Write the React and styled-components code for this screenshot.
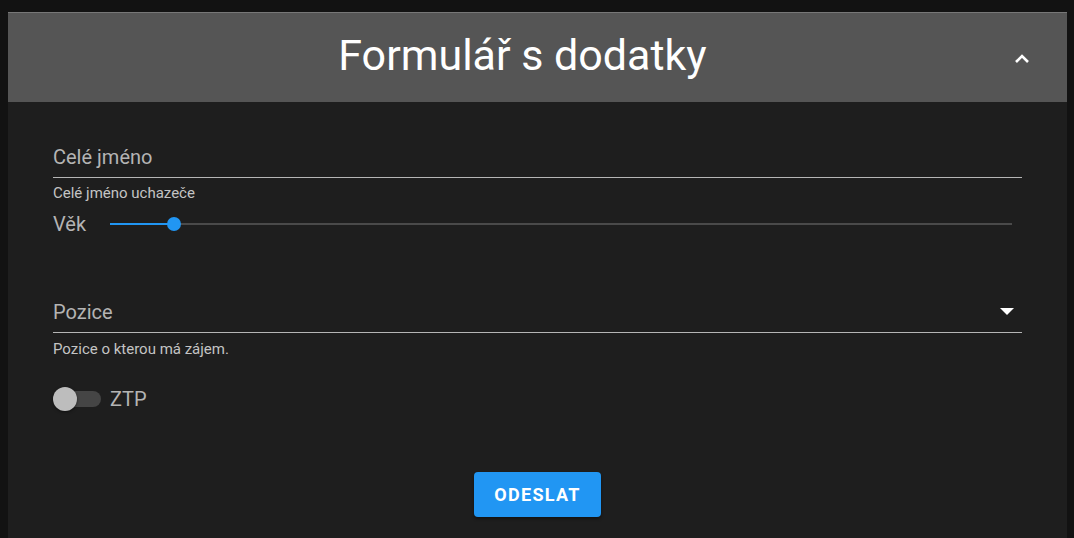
import React from 'react';
import styled, { createGlobalStyle } from 'styled-components';

const GlobalStyle = createGlobalStyle`
  body {
    margin: 0;
    background: #121212;
    font-family: Roboto, "Liberation Sans", sans-serif;
  }
`;

const Page = styled.div`
  padding: 12px 7px 0 8px;
`;

const Card = styled.div`
  background: #1e1e1e;
`;

const Header = styled.div`
  height: 90px;
  background: #555555;
  border-top: 1px solid #777777;
  box-sizing: border-box;
  display: flex;
  align-items: center;
  padding: 0 37px 0 23px;
`;

const Title = styled.h1`
  flex: 1;
  margin: 0;
  text-align: center;
  font-size: 43px;
  font-weight: 400;
  color: #ffffff;
  padding-bottom: 6px;
`;

const Toggle = styled.button`
  background: none;
  border: none;
  padding: 2px 0 0;
  display: flex;
`;

const Body = styled.div`
  padding: 38px 45px 21px;
  display: flex;
  flex-direction: column;
`;

const Field = styled.div`
  display: flex;
  align-items: center;
  justify-content: space-between;
  box-sizing: border-box;
  height: 38px;
  padding: 0 8px 4px 0;
  border-bottom: 1px solid #b5b5b5;
  margin-top: ${p => p.$mt || 0}px;
`;

const FieldLabel = styled.span`
  font-size: 20px;
  color: #b4b4b4;
`;

const Helper = styled.p`
  margin: ${p => p.$mt}px 0 0;
  font-size: 15px;
  color: #c4c4c4;
`;

const SliderRow = styled.div`
  display: flex;
  align-items: center;
  gap: 24px;
  margin-top: 10px;
  padding-right: 10px;
`;

const Track = styled.div`
  position: relative;
  flex: 1;
  height: 2px;
  background: #4a4a4a;
`;

const Fill = styled.div`
  height: 2px;
  background: #2196f3;
`;

const Thumb = styled.div`
  position: absolute;
  top: -6px;
  width: 14px;
  height: 14px;
  border-radius: 50%;
  background: #2196f3;
  margin-left: -7px;
`;

const SwitchRow = styled.label`
  display: flex;
  align-items: center;
  gap: 9px;
  margin-top: 29px;
`;

const Switch = styled.span`
  position: relative;
  width: 48px;
  height: 24px;
  display: flex;
  align-items: center;
`;

const SwitchTrack = styled.span`
  margin-left: 10px;
  width: 38px;
  height: 16px;
  border-radius: 8px;
  background: #454545;
`;

const SwitchKnob = styled.span`
  position: absolute;
  left: 0;
  top: 0;
  width: 24px;
  height: 24px;
  border-radius: 50%;
  background: #bdbdbd;
  box-shadow: 0 1px 3px rgba(0, 0, 0, 0.5);
`;

const Actions = styled.div`
  display: flex;
  justify-content: center;
  margin-top: 61px;
`;

const SubmitButton = styled.button`
  width: 127px;
  height: 45px;
  border: none;
  border-radius: 4px;
  background: #2196f3;
  color: #ffffff;
  font-family: Roboto, "Liberation Sans", sans-serif;
  font-size: 18px;
  font-weight: 700;
  letter-spacing: 1.3px;
  box-shadow: 0 2px 3px rgba(0, 0, 0, 0.4);
`;

const App = () => {
  const age = 7.1;
  return (
    <Page>
      <GlobalStyle />
      <Card>
        <Header>
          <Title>Formulář s dodatky</Title>
          <Toggle>
            <svg width="16" height="12" viewBox="0 0 16 12">
              <path d="M2 9 L8 3 L14 9" fill="none" stroke="#fff" strokeWidth="2.6" />
            </svg>
          </Toggle>
        </Header>
        <Body>
          <Field>
            <FieldLabel>Celé jméno</FieldLabel>
          </Field>
          <Helper $mt={6}>Celé jméno uchazeče</Helper>
          <SliderRow>
            <FieldLabel>Věk</FieldLabel>
            <Track>
              <Fill style={{ width: `${age}%` }} />
              <Thumb style={{ left: `${age}%` }} />
            </Track>
          </SliderRow>
          <Field $mt={59}>
            <FieldLabel>Pozice</FieldLabel>
            <svg width="14" height="8" viewBox="0 0 14 8">
              <path d="M0 0 L14 0 L7 7 Z" fill="#fff" />
            </svg>
          </Field>
          <Helper $mt={7}>Pozice o kterou má zájem.</Helper>
          <SwitchRow>
            <Switch>
              <SwitchTrack />
              <SwitchKnob />
            </Switch>
            <FieldLabel>ZTP</FieldLabel>
          </SwitchRow>
          <Actions>
            <SubmitButton>ODESLAT</SubmitButton>
          </Actions>
        </Body>
      </Card>
    </Page>
  );
};

export default App;
